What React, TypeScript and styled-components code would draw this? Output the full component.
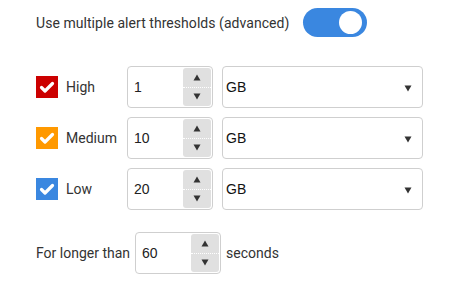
import React, { useState } from "react";
import styled, { createGlobalStyle } from "styled-components";

const GlobalStyle = createGlobalStyle`
  body {
    margin: 0;
    background: #fff;
    font-family: Roboto, "Liberation Sans", Arial, sans-serif;
    color: #333;
  }
`;

const Page = styled.div`
  padding: 8px 0 0 36px;
  width: 450px;
  height: 288px;
  box-sizing: border-box;
`;

const Header = styled.div`
  display: flex;
  align-items: center;
  gap: 14px;
  height: 29px;
  font-size: 14px;
  letter-spacing: 0.05px;
`;

const Toggle = styled.button<{ $on: boolean }>`
  position: relative;
  width: 64px;
  height: 29px;
  border: none;
  border-radius: 15px;
  padding: 0;
  cursor: pointer;
  background: ${(p) => (p.$on ? "#3a87e0" : "#ccc")};
`;

const Knob = styled.span<{ $on: boolean }>`
  position: absolute;
  top: 3px;
  left: ${(p) => (p.$on ? "36px" : "4px")};
  width: 23px;
  height: 23px;
  border-radius: 50%;
  background: #fff;
`;

const Rows = styled.div`
  margin-top: 29px;
  display: flex;
  flex-direction: column;
  gap: 9px;
`;

const Row = styled.div`
  display: grid;
  grid-template-columns: 82px 86px 201px;
  column-gap: 9px;
  align-items: center;
`;

const LevelLabel = styled.label`
  display: flex;
  align-items: center;
  gap: 8px;
  font-size: 14px;
  cursor: pointer;
`;

const Check = styled.span<{ $color: string; $checked: boolean }>`
  display: flex;
  align-items: center;
  justify-content: center;
  width: 22px;
  height: 22px;
  background: ${(p) => (p.$checked ? p.$color : "#fff")};
  border: ${(p) => (p.$checked ? "none" : "1px solid #999")};
  box-sizing: border-box;
`;

const NumberBox = styled.div`
  display: flex;
  width: 86px;
  height: 42px;
  box-sizing: border-box;
  border: 1px solid #cfcfcf;
  border-radius: 4px;
  padding: 1px;
  background: #fff;
`;

const NumberInput = styled.input`
  flex: 1;
  min-width: 0;
  border: none;
  outline: none;
  padding: 0 0 0 5px;
  font-family: "Liberation Sans", Arial, sans-serif;
  font-size: 14px;
  color: #222;
  background: transparent;
`;

const Spinner = styled.div`
  display: flex;
  flex-direction: column;
  width: 28px;
  background: #e0e0e0;
  border-radius: 3px;
`;

const SpinButton = styled.button<{ $top?: boolean }>`
  flex: 1;
  display: flex;
  align-items: center;
  justify-content: center;
  border: none;
  padding: 0;
  background: transparent;
  cursor: pointer;
  border-bottom: ${(p) => (p.$top ? "1px dotted #fff" : "none")};
`;

const SelectBox = styled.div`
  position: relative;
  height: 42px;
  box-sizing: border-box;
  border: 1px solid #cfcfcf;
  border-radius: 4px;
  background: #fff;
`;

const Select = styled.select`
  appearance: none;
  width: 100%;
  height: 100%;
  border: none;
  outline: none;
  background: transparent;
  padding: 0 0 0 3px;
  font-family: "Liberation Sans", Arial, sans-serif;
  font-size: 14px;
  color: #111;
  cursor: pointer;
`;

const Arrow = styled.span`
  position: absolute;
  right: 10px;
  top: 18px;
  pointer-events: none;
  display: flex;
`;

const Footer = styled.div`
  margin-top: 22px;
  display: flex;
  align-items: center;
  gap: 5px;
  font-size: 14px;
`;

const Tri = ({ up }: { up?: boolean }) => (
  <svg width="8" height="7" viewBox="0 0 8 7">
    <path d={up ? "M4 0.5 L7.5 6.5 L0.5 6.5 Z" : "M0.5 0.5 L7.5 0.5 L4 6.5 Z"} fill="#333" />
  </svg>
);

const Stepper = ({ value, onChange }: { value: number; onChange: (v: number) => void }) => (
  <NumberBox>
    <NumberInput value={value} onChange={(e) => onChange(Number(e.target.value) || 0)} />
    <Spinner>
      <SpinButton $top onClick={() => onChange(value + 1)}>
        <Tri up />
      </SpinButton>
      <SpinButton onClick={() => onChange(Math.max(0, value - 1))}>
        <Tri />
      </SpinButton>
    </Spinner>
  </NumberBox>
);

const levels = [
  { name: "High", color: "#cc0000", value: 1 },
  { name: "Medium", color: "#ff9900", value: 10 },
  { name: "Low", color: "#3a87e0", value: 20 },
];

export default function App() {
  const [on, setOn] = useState(true);
  const [values, setValues] = useState(levels.map((l) => l.value));
  const [checked, setChecked] = useState([true, true, true]);
  const [duration, setDuration] = useState(60);

  return (
    <>
      <GlobalStyle />
      <Page>
        <Header>
          <span>Use multiple alert thresholds (advanced)</span>
          <Toggle $on={on} onClick={() => setOn(!on)}>
            <Knob $on={on} />
          </Toggle>
        </Header>
        <Rows>
          {levels.map((l, i) => (
            <Row key={l.name}>
              <LevelLabel onClick={() => setChecked(checked.map((c, j) => (j === i ? !c : c)))}>
                <Check $color={l.color} $checked={checked[i]}>
                  {checked[i] && (
                    <svg width="22" height="22" viewBox="0 0 22 22">
                      <path d="M5.5 11.5 L9 15 L16.5 7.5" fill="none" stroke="#fff" strokeWidth="3.2" strokeLinecap="round" strokeLinejoin="round" />
                    </svg>
                  )}
                </Check>
                {l.name}
              </LevelLabel>
              <Stepper value={values[i]} onChange={(v) => setValues(values.map((x, j) => (j === i ? v : x)))} />
              <SelectBox>
                <Select defaultValue="GB">
                  <option value="MB">MB</option>
                  <option value="GB">GB</option>
                  <option value="TB">TB</option>
                </Select>
                <Arrow>
                  <Tri />
                </Arrow>
              </SelectBox>
            </Row>
          ))}
        </Rows>
        <Footer>
          <span>For longer than</span>
          <Stepper value={duration} onChange={setDuration} />
          <span>seconds</span>
        </Footer>
      </Page>
    </>
  );
}
